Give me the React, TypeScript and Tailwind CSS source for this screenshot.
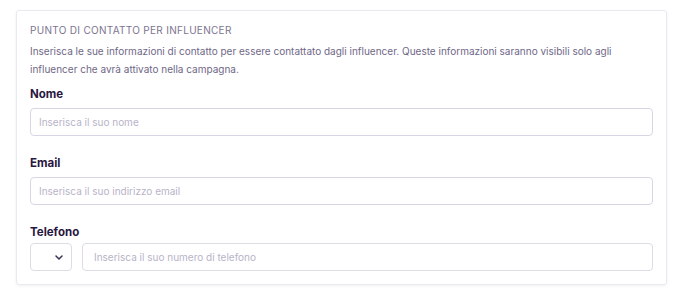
import React from "react";

const font = { fontFamily: "Inter, 'Noto Sans', sans-serif" };

function Field({ label, placeholder }: { label: string; placeholder: string }) {
  return (
    <div className="flex flex-col">
      <div className="text-[11.5px] leading-[14px] font-bold text-[#2a1741]">{label}</div>
      <div className="mt-[7px] h-[28px] rounded-[4px] border border-[#d9d5e4] flex items-center pl-[8px] text-[10px] text-[#b8b3c8]">
        {placeholder}
      </div>
    </div>
  );
}

export default function App() {
  return (
    <div className="w-[688px] h-[297px] bg-white pt-[10px] pl-[16px]" style={font}>
      <div className="w-[651px] h-[275px] border border-[#eae8f0] rounded-[3px] shadow-[0_1px_3px_rgba(60,50,100,0.08)] px-[13px] pt-[12px]">
        <div className="text-[10px] leading-[14px] tracking-[0.3px] text-[#7b7490] uppercase">Punto di contatto per influencer</div>
        <div className="mt-[5px] text-[10px] leading-[18px] text-[#6f6887] w-[612px]">
          Inserisca le sue informazioni di contatto per essere contattato dagli influencer. Queste informazioni saranno visibili solo agli influencer che avrà attivato nella campagna.
        </div>
        <div className="mt-[9px] flex flex-col gap-[20px]">
          <Field label="Nome" placeholder="Inserisca il suo nome" />
          <Field label="Email" placeholder="Inserisca il suo indirizzo email" />
          <div className="flex flex-col">
            <div className="text-[11.5px] leading-[14px] font-bold text-[#2a1741]">Telefono</div>
            <div className="mt-[4px] flex gap-[10px]">
              <div className="w-[42px] h-[28px] rounded-[4px] border border-[#dedbe6] flex items-center justify-end pr-[8px]">
                <svg width="8" height="5" viewBox="0 0 8 5" fill="none">
                  <path d="M1 1 L4 4 L7 1" stroke="#3b3152" strokeWidth="1.5" strokeLinecap="round" strokeLinejoin="round" />
                </svg>
              </div>
              <div className="flex-1 h-[28px] rounded-[4px] border border-[#dedbe6] flex items-center pl-[11px] text-[10px] text-[#b8b3c8]">
                Inserisca il suo numero di telefono
              </div>
            </div>
          </div>
        </div>
      </div>
    </div>
  );
}
